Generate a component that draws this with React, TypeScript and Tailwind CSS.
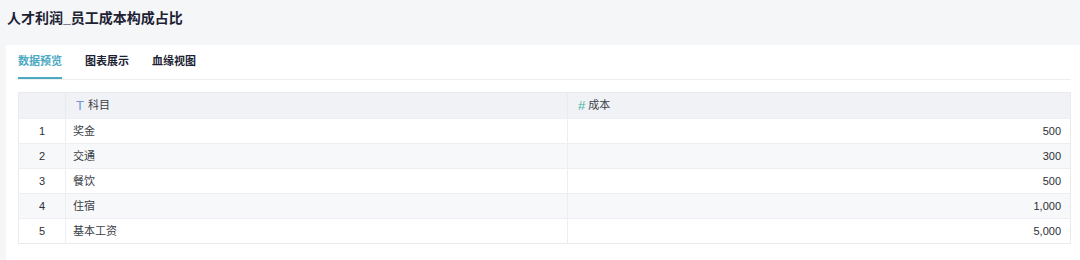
import React from "react";

const rows = [
  { no: 1, name: "奖金", cost: "500" },
  { no: 2, name: "交通", cost: "300" },
  { no: 3, name: "餐饮", cost: "500" },
  { no: 4, name: "住宿", cost: "1,000" },
  { no: 5, name: "基本工资", cost: "5,000" },
];

const tabs = ["数据预览", "图表展示", "血缘视图"];

export default function App() {
  return (
    <div
      className="h-[260px] w-[1080px] overflow-hidden bg-[#f5f6f8] text-[#2b2f36]"
      style={{ fontFamily: '"Liberation Sans", "Noto Sans CJK SC", sans-serif' }}
    >
      {/* header title */}
      <div className="flex h-[37px] items-center px-[7px] text-[14px] font-bold text-[#1c2233]">
        人才利润_员工成本构成占比
      </div>

      <div className="ml-[6px] mt-[8px] h-[215px] bg-white pl-[12px] pr-[9px]">
        {/* tabs */}
        <div className="flex h-[35px] items-stretch gap-[23px] border-b border-[#eceef2]">
          {tabs.map((t, i) => (
            <div
              key={t}
              className={
                "flex items-center pt-[1px] text-[11px] font-bold " +
                (i === 0
                  ? "border-b-2 border-[#4ba9c2] text-[#4ba9c2]"
                  : "border-b-2 border-transparent text-[#1c2233]")
              }
            >
              {t}
            </div>
          ))}
        </div>

        {/* table */}
        <div className="mt-[12px] border border-[#e9ebef] text-[11px] text-[#3a3e46]">
          <div className="grid h-[25px] grid-cols-[47px_502px_1fr] bg-[#f0f2f5]">
            <div className="border-r border-[#e9ebef]" />
            <div className="flex items-center gap-[4px] border-r border-[#e9ebef] pl-[10px]">
              <span className="text-[13px] text-[#6f93d8]">T</span>
              <span>科目</span>
            </div>
            <div className="flex items-center gap-[3px] pl-[10px]">
              <span className="text-[13px] text-[#3fb3a6]">#</span>
              <span>成本</span>
            </div>
          </div>
          {rows.map((r, i) => (
            <div
              key={r.no}
              className={
                "grid h-[25px] grid-cols-[47px_502px_1fr] border-t border-[#eceef2] " +
                (i % 2 === 1 ? "bg-[#f7f8fa]" : "bg-white")
              }
            >
              <div className="flex items-center justify-center border-r border-[#eceef2] text-[#2b2f36]">{r.no}</div>
              <div className="flex items-center border-r border-[#eceef2] pl-[7px]">{r.name}</div>
              <div className="flex items-center justify-end pr-[9px] text-[#2b2f36]">{r.cost}</div>
            </div>
          ))}
        </div>
      </div>
    </div>
  );
}
